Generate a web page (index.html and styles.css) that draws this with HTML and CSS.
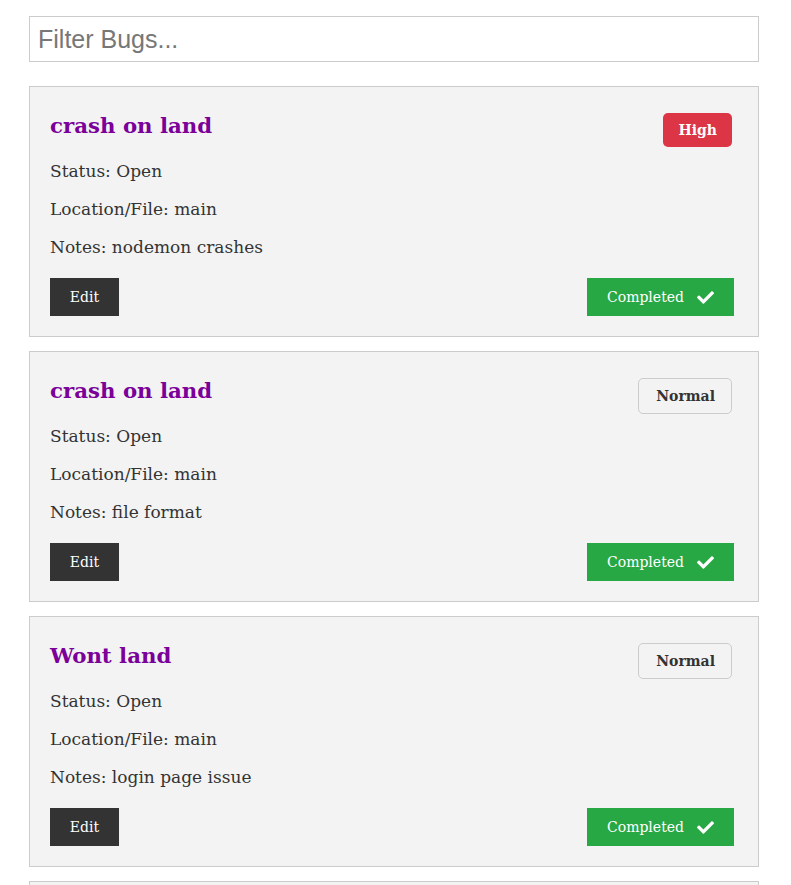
FILE: index.html
```html
<!DOCTYPE html>
<html>
<head>
<meta charset="utf-8">
<link rel="stylesheet" href="styles.css">
</head>
<body>
<div class="wrap">
  <input class="filter" type="text" placeholder="Filter Bugs...">
  <div class="card">
    <div class="head">
      <h2 class="title">crash on land</h2>
      <span class="badge high">High</span>
    </div>
    <p class="line">Status: Open</p>
    <p class="line">Location/File: main</p>
    <p class="line">Notes: nodemon crashes</p>
    <div class="actions">
      <button class="btn edit">Edit</button>
      <button class="btn done">Completed <svg class="check" viewBox="0 0 512 512" width="17" height="17"><path fill="#fff" d="M173.9 439.4l-166.4-166.4c-10-10-10-26.2 0-36.2l36.2-36.2c10-10 26.2-10 36.2 0L192 312.7 432.1 72.6c10-10 26.2-10 36.2 0l36.2 36.2c10 10 10 26.2 0 36.2l-294.4 294.4c-10 10-26.2 10-36.2 0z"/></svg></button>
    </div>
  </div>
  <div class="card">
    <div class="head">
      <h2 class="title">crash on land</h2>
      <span class="badge normal">Normal</span>
    </div>
    <p class="line">Status: Open</p>
    <p class="line">Location/File: main</p>
    <p class="line">Notes: file format</p>
    <div class="actions">
      <button class="btn edit">Edit</button>
      <button class="btn done">Completed <svg class="check" viewBox="0 0 512 512" width="17" height="17"><path fill="#fff" d="M173.9 439.4l-166.4-166.4c-10-10-10-26.2 0-36.2l36.2-36.2c10-10 26.2-10 36.2 0L192 312.7 432.1 72.6c10-10 26.2-10 36.2 0l36.2 36.2c10 10 10 26.2 0 36.2l-294.4 294.4c-10 10-26.2 10-36.2 0z"/></svg></button>
    </div>
  </div>
  <div class="card">
    <div class="head">
      <h2 class="title">Wont land</h2>
      <span class="badge normal">Normal</span>
    </div>
    <p class="line">Status: Open</p>
    <p class="line">Location/File: main</p>
    <p class="line">Notes: login page issue</p>
    <div class="actions">
      <button class="btn edit">Edit</button>
      <button class="btn done">Completed <svg class="check" viewBox="0 0 512 512" width="17" height="17"><path fill="#fff" d="M173.9 439.4l-166.4-166.4c-10-10-10-26.2 0-36.2l36.2-36.2c10-10 26.2-10 36.2 0L192 312.7 432.1 72.6c10-10 26.2-10 36.2 0l36.2 36.2c10 10 10 26.2 0 36.2l-294.4 294.4c-10 10-26.2 10-36.2 0z"/></svg></button>
    </div>
  </div>
  <div class="card empty"></div>
</div>
</body>
</html>
```
FILE: styles.css
```css
html, body { margin: 0; padding: 0; background: #fff; }
body { font-family: "DejaVu Serif", Georgia, serif; color: #333; }
.wrap { width: 730px; margin: 0 0 0 29px; padding-top: 16px; }
.filter {
  display: block; box-sizing: border-box; width: 730px; height: 46px;
  border: 1px solid #ccc; padding: 0 8px; margin: 0 0 24px 0;
  font-family: "Liberation Sans", Arial, sans-serif; font-size: 25px; color: #333;
  outline: none;
}
.filter::placeholder { color: #777; }
.card {
  box-sizing: border-box; width: 730px; background: #f3f3f3; border: 1px solid #ccc;
  padding: 20px 24px 20px 20px; margin-bottom: 14px;
}
.empty { height: 40px; }
.head { display: flex; justify-content: space-between; align-items: flex-start; height: 40px; margin-bottom: 5px; }
.title { margin: 6px 0 0 0; font-size: 21.3px; font-weight: bold; color: #7a0099; line-height: 26px; }
.badge { font-size: 14px; font-weight: bold; border-radius: 5px; padding: 0 15px; line-height: 34px; margin-top: 6px; margin-right: 2px; }
.high { background: #dc3545; color: #fff; }
.normal { background: #f3f3f3; border: 1px solid #ccc; color: #333; padding: 0 16px 0 17px; }
.line { margin: 0; font-size: 17px; line-height: 38px; }
.actions { display: flex; justify-content: space-between; margin-top: 12px; }
.btn { border: 0; height: 38px; padding: 0; font-family: "DejaVu Serif", Georgia, serif; font-size: 14px; color: #fff; cursor: pointer; }
.edit { background: #333; width: 69px; }
.done { background: #28a745; width: 147px; display: flex; align-items: center; justify-content: center; gap: 13px; }
.check { display: block; }
```
